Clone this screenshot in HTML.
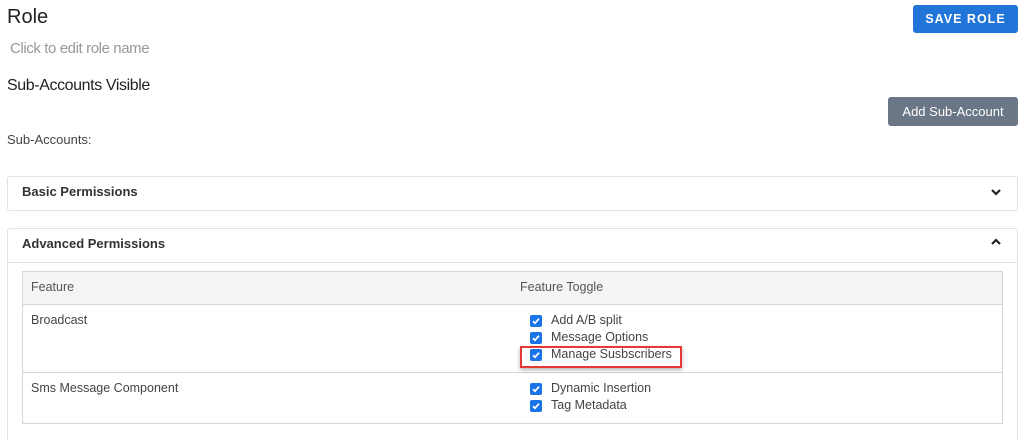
<!DOCTYPE html>
<html style="width:1031px;height:440px;overflow:hidden"><head><style>
*{box-sizing:border-box;margin:0;padding:0}
body{width:1031px;height:440px;overflow:hidden;background:#fff;font-family:"Liberation Sans",sans-serif;color:#333;position:relative}
.a{position:absolute}
.cb{position:absolute;width:12px;height:12px;background:#1a73e8;border-radius:2px}
.cb svg{position:absolute;left:0;top:0}
.t{font-size:12.5px;color:#444}
</style></head><body>
<div class="a" style="left:7px;top:6px;font-size:20px;color:#222">Role</div>
<div class="a" style="left:10px;top:40px;font-size:15px;color:#999;letter-spacing:-0.4px">Click to edit role name</div>
<div class="a" style="left:7px;top:77px;font-size:16px;color:#222;letter-spacing:-0.4px">Sub-Accounts Visible</div>
<div class="a" style="left:7px;top:132px;font-size:13px;color:#444">Sub-Accounts:</div>
<div class="a" style="left:913px;top:5px;width:105px;height:28px;background:#2174d8;border-radius:3px;color:#fff;font-weight:bold;font-size:12.5px;letter-spacing:1px;text-align:center;line-height:28px">SAVE ROLE</div>
<div class="a" style="left:888px;top:97px;width:130px;height:29px;background:#6b7686;border-radius:3px;color:#fff;font-size:13px;text-align:center;line-height:29px">Add Sub-Account</div>

<div class="a" style="left:7px;top:176px;width:1011px;height:35px;border:1px solid #e3e3e3;border-radius:3px"></div>
<div class="a" style="left:22px;top:184px;font-size:13px;font-weight:bold;color:#333">Basic Permissions</div>
<svg class="a" style="left:990px;top:187px" width="12" height="10"><path d="M2 3l4 4 4-4" stroke="#222" stroke-width="2.2" fill="none"/></svg>

<div class="a" style="left:7px;top:228px;width:1011px;height:212px;border:1px solid #e3e3e3;border-bottom:none;border-radius:3px 3px 0 0"></div>
<div class="a" style="left:7px;top:262px;width:1011px;height:1px;background:#e3e3e3"></div>
<div class="a" style="left:22px;top:236px;font-size:13px;font-weight:bold;color:#333">Advanced Permissions</div>
<svg class="a" style="left:990px;top:237px" width="12" height="10"><path d="M2 7l4-4 4 4" stroke="#222" stroke-width="2.2" fill="none"/></svg>

<div class="a" style="left:22px;top:271px;width:981px;height:153px;border:1px solid #d6d6d6"></div>
<div class="a" style="left:23px;top:272px;width:979px;height:33px;background:#f5f5f5;border-bottom:1px solid #d6d6d6"></div>
<div class="a" style="left:23px;top:372px;width:979px;height:1px;background:#d6d6d6"></div>
<div class="a t" style="left:31px;top:280px;color:#555">Feature</div>
<div class="a t" style="left:520px;top:280px;color:#555">Feature Toggle</div>
<div class="a t" style="left:31px;top:313px">Broadcast</div>
<div class="a t" style="left:31px;top:381px">Sms Message Component</div>

<div class="cb" style="left:530px;top:315px"><svg width="12" height="12"><path d="M3 6.2l2 2 4-4.5" stroke="#fff" stroke-width="1.8" fill="none"/></svg></div>
<div class="a t" style="left:551px;top:313px">Add A/B split</div>
<div class="cb" style="left:530px;top:332px"><svg width="12" height="12"><path d="M3 6.2l2 2 4-4.5" stroke="#fff" stroke-width="1.8" fill="none"/></svg></div>
<div class="a t" style="left:551px;top:330px">Message Options</div>
<div class="cb" style="left:530px;top:349px"><svg width="12" height="12"><path d="M3 6.2l2 2 4-4.5" stroke="#fff" stroke-width="1.8" fill="none"/></svg></div>
<div class="a t" style="left:551px;top:347px">Manage Susbscribers</div>
<div class="a" style="left:520px;top:346px;width:162px;height:22px;border:2px solid #e53935;box-shadow:0 2px 4px rgba(0,0,0,.3)"></div>
<div class="cb" style="left:530px;top:383px"><svg width="12" height="12"><path d="M3 6.2l2 2 4-4.5" stroke="#fff" stroke-width="1.8" fill="none"/></svg></div>
<div class="a t" style="left:551px;top:381px">Dynamic Insertion</div>
<div class="cb" style="left:530px;top:400px"><svg width="12" height="12"><path d="M3 6.2l2 2 4-4.5" stroke="#fff" stroke-width="1.8" fill="none"/></svg></div>
<div class="a t" style="left:551px;top:398px">Tag Metadata</div>
</body></html>
